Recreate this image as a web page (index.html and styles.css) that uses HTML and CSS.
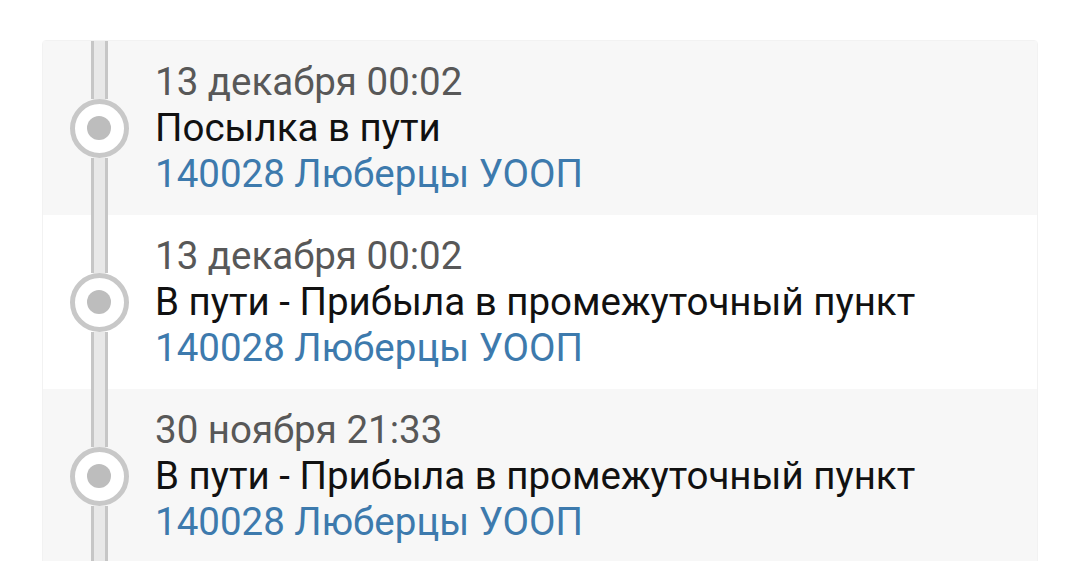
FILE: index.html
```html
<!DOCTYPE html>
<html lang="ru">
<head>
    <meta charset="UTF-8">
    <meta name="viewport" content="width=device-width, initial-scale=1.0">
    <title>Отслеживание</title>
    <link rel="stylesheet" href="styles.css">
</head>
<body>
    <div class="track">
        <div class="event shade">
            <div class="rail">
                <div class="seg"></div>
                <div class="dot"></div>
                <div class="seg"></div>
            </div>
            <div class="info">
                <div class="date">13 декабря 00:02</div>
                <div class="status">Посылка в пути</div>
                <div class="place">140028 Люберцы УООП</div>
            </div>
        </div>
        <div class="event">
            <div class="rail">
                <div class="seg"></div>
                <div class="dot"></div>
                <div class="seg"></div>
            </div>
            <div class="info">
                <div class="date">13 декабря 00:02</div>
                <div class="status">В пути - Прибыла в промежуточный пункт</div>
                <div class="place">140028 Люберцы УООП</div>
            </div>
        </div>
        <div class="event shade">
            <div class="rail">
                <div class="seg"></div>
                <div class="dot"></div>
                <div class="seg"></div>
            </div>
            <div class="info">
                <div class="date">30 ноября 21:33</div>
                <div class="status">В пути - Прибыла в промежуточный пункт</div>
                <div class="place">140028 Люберцы УООП</div>
            </div>
        </div>
    </div>
</body>
</html>
```

FILE: styles.css
```css
html, body {
    margin: 0;
    padding: 0;
    background: #fff;
    font-family: Roboto, "Noto Sans", sans-serif;
}
body {
    padding: 40px 36px 0 42px;
    height: 561px;
    box-sizing: border-box;
    overflow: hidden;
}
.track {
    border: 1px solid #f2f2f2;
    border-radius: 4px 4px 0 0;
    background: #fff;
}
.event {
    display: flex;
    height: 174px;
}
.shade {
    background-color: #f7f7f7;
}
/* вертикальная линия с кружком */
.rail {
    width: 112px;
    display: flex;
    flex-direction: column;
    align-items: center;
}
.seg {
    flex: 1;
    width: 11px;
    border-left: 3px solid #c6c6c6;
    border-right: 3px solid #c6c6c6;
    background: #e8e8e8;
}
.dot {
    width: 49px;
    height: 49px;
    border: 5px solid #c8c8c8;
    border-radius: 50%;
    background: #fff;
    display: flex;
    justify-content: center;
    align-items: center;
}
.dot::after {
    content: "";
    width: 24px;
    height: 24px;
    border-radius: 50%;
    background: #bdbdbd;
}
.info {
    padding-top: 18px;
    font-size: 38.5px;
    line-height: 46px;
}
.date {
    color: #585858;
}
.status {
    color: #111;
}
.place {
    color: #3d7aad;
}
```
